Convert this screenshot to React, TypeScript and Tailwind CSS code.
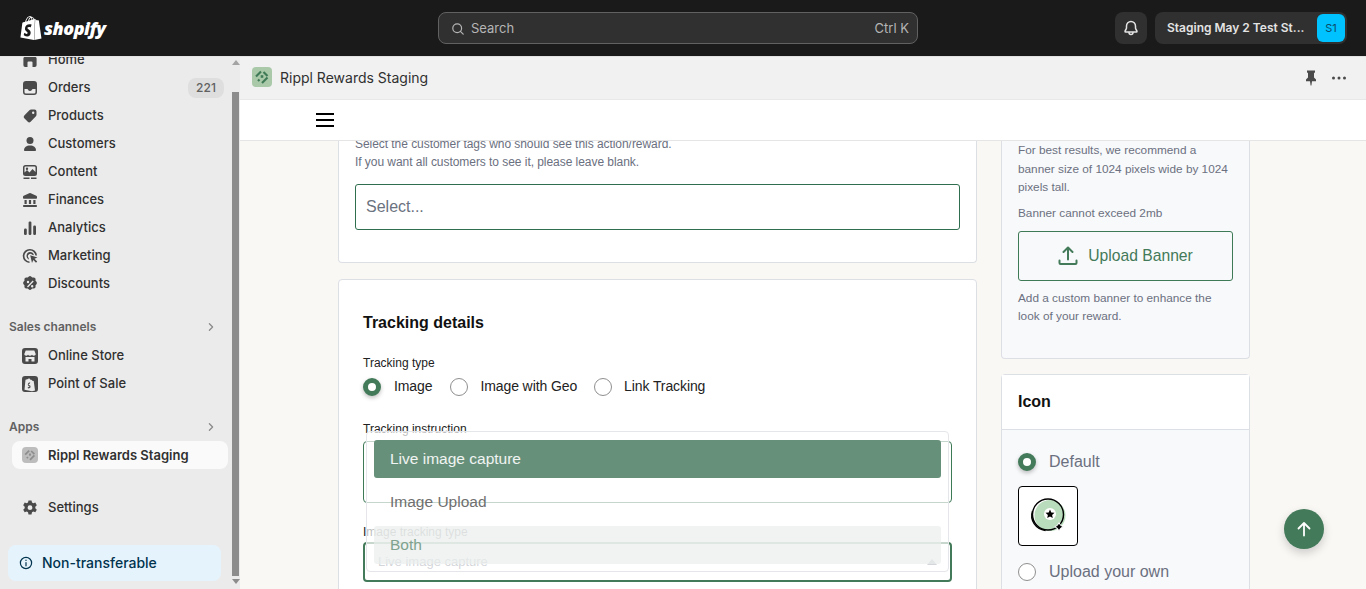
import React from "react";
import { SiShopify } from "react-icons/si";

const I = ({ d, children }: { d?: string; children?: React.ReactNode }) => (
  <svg viewBox="0 0 20 20" className="w-5 h-5 shrink-0" fill="#4a4a4a" fillRule="evenodd">
    {d ? <path d={d} /> : children}
  </svg>
);

const icons: Record<string, React.ReactNode> = {
  home: <I d="M9 3.300a1.600 1.600 0 0 1 2 0l5 3.900c.4.3.6.8.6 1.300v6.700a1.800 1.800 0 0 1-1.800 1.800h-2.300v-4.500a1 1 0 0 0-1-1h-3a1 1 0 0 0-1 1V17H5.200a1.800 1.800 0 0 1-1.800-1.800V8.500c0-.5.2-1 .6-1.300L9 3.300Z" />,
  orders: <I d="M6 3h8a3 3 0 0 1 3 3v8a3 3 0 0 1-3 3H6a3 3 0 0 1-3-3V6a3 3 0 0 1 3-3Zm-1.500 8v3A1.500 1.500 0 0 0 6 15.500h8a1.500 1.500 0 0 0 1.500-1.500v-3h-2.600c-.5 0-.8.3-1 .7a2 2 0 0 1-3.800 0c-.2-.4-.5-.7-1-.7H4.500Z" />,
  products: <I d="M11.200 3.500h3.300A2 2 0 0 1 16.500 5.500v3.300c0 .7-.3 1.300-.8 1.800l-5.100 5.100a2 2 0 0 1-2.800 0l-3.500-3.500a2 2 0 0 1 0-2.800l5.100-5.100c.5-.5 1.100-.8 1.800-.8Zm2 4.500a1.200 1.200 0 1 0 0-2.400 1.200 1.200 0 0 0 0 2.400Z" />,
  customers: <I><circle cx="10" cy="6.500" r="3.500" /><path d="M4 16.200c0-3 2.500-4.700 6-4.700s6 1.700 6 4.700c0 .5-.4.800-.8.800H4.800c-.4 0-.8-.3-.8-.8Z" /></I>,
  content: <I d="M5.500 3h9A2.500 2.500 0 0 1 17 5.500v6a2.500 2.500 0 0 1-2.500 2.500h-9A2.500 2.500 0 0 1 3 11.500v-6A2.500 2.500 0 0 1 5.500 3ZM4.500 10.500l2.500-2.500 2.500 2.500 3-3.500 3 3V5.500a1 1 0 0 0-1-1h-9a1 1 0 0 0-1 1v5ZM3.500 15.500h6v1.500h-6v-1.500Zm7.500 0h5.500v1.500H11v-1.500ZM7 5.500a1.200 1.200 0 1 1 0 2.400 1.200 1.200 0 0 1 0-2.400Z" />,
  finances: <I d="M9.200 3.200a2 2 0 0 1 1.600 0l5.500 2.500c.5.200.7.600.7 1V8a.8.800 0 0 1-.8.800H3.800A.8.800 0 0 1 3 8V6.700c0-.4.200-.8.700-1l5.500-2.500ZM4.500 10h2.200v4H4.500v-4Zm4.400 0h2.200v4H8.900v-4Zm4.400 0h2.200v4h-2.200v-4ZM3.800 15h12.400c.5 0 .8.300.8.800v.4c0 .5-.3.800-.8.800H3.800a.8.800 0 0 1-.8-.8v-.4c0-.5.300-.8.800-.8Z" />,
  analytics: <I><rect x="4" y="10.500" width="2.800" height="6.500" rx="1.200" /><rect x="8.600" y="3.500" width="2.800" height="13.500" rx="1.200" /><rect x="13.200" y="7.500" width="2.800" height="9.500" rx="1.200" /></I>,
  marketing: <I d="M10 3a7 7 0 0 1 7 6.500h-1.600A5.500 5.500 0 1 0 9.500 15.500V17A7 7 0 0 1 10 3Zm0 3a4 4 0 0 1 3.900 3.200l-1.700-.4A2.400 2.400 0 1 0 8.600 12l.5 1.700A4 4 0 0 1 10 6Zm.2 3.200 7.300 2.300-3 1.300 2.700 2.800-1.200 1.200-2.700-2.700-1.300 3-1.800-7.900Z" />,
  discounts: <I d="M8.600 2.700a2 2 0 0 1 2.800 0l.9.800 1.200-.1a2 2 0 0 1 2.100 2.100l-.1 1.200.8.900a2 2 0 0 1 0 2.800l-.8.900.1 1.200a2 2 0 0 1-2.100 2.100l-1.200-.1-.9.800a2 2 0 0 1-2.800 0l-.9-.8-1.200.1a2 2 0 0 1-2.100-2.100l.1-1.200-.8-.9a2 2 0 0 1 0-2.800l.8-.9-.1-1.200A2 2 0 0 1 6.500 3.400l1.200.1.900-.8ZM12.700 6.500l-5.700 6 1 .9 5.700-6-1-.9ZM8 6.800a1.200 1.200 0 1 0 0 2.400 1.200 1.200 0 0 0 0-2.400Zm4.200 4.200a1.200 1.200 0 1 0 0 2.400 1.200 1.200 0 0 0 0-2.400Z" />,
  store: <I d="M5 2h10a3 3 0 0 1 3 3v10a3 3 0 0 1-3 3H5a3 3 0 0 1-3-3V5a3 3 0 0 1 3-3Zm.7 2.500L4.300 8c0 1 .9 1.700 1.900 1.700.7 0 1.300-.3 1.800-.9.400.6 1.200.9 2 .9s1.500-.3 2-.9c.4.6 1.100.9 1.800.9 1 0 1.900-.7 1.900-1.700l-1.400-3.500H5.700ZM5.500 11v4.500h3V13h3v2.500h3V11h-9Z" />,
  pos: <I d="M5 2h10a3 3 0 0 1 3 3v10a3 3 0 0 1-3 3H5a3 3 0 0 1-3-3V5a3 3 0 0 1 3-3Zm3 3-2.500.7-1 10 7.500 1.500 3-.7-1.300-9.500-1.400-.2-.8-1-.8.100C10 4.500 9 4.300 8 5Zm2.200 3.500-.4 1.200c-1.500-.4-1.500 1-.1 1.600 1.500.8 1 3.200-1.100 3.200l-.9-.5.3-1.200c.6.500 1.400.5 1.400 0 0-.7-1.800-1-1.600-2.600.2-1.300 1.300-1.900 2.400-1.700Z" />,
  settings: <I d="M8.500 2.500h3l.5 2.100 1.300.7 2-.7 1.500 2.600-1.500 1.500v1.500l1.500 1.500-1.500 2.600-2-.7-1.300.7-.5 2.200h-3l-.5-2.200-1.300-.7-2 .7-1.500-2.600L4.700 10.200V8.700L3.200 7.200l1.500-2.600 2 .7L8 4.600l.5-2.100ZM10 7.300a2.400 2.400 0 1 0 0 4.800 2.400 2.400 0 0 0 0-4.800Z" />,
};

const RipplMark = ({ color, bg, size }: { color: string; bg: string; size: string }) => (
  <div className={`${size} rounded-[4px] shrink-0 flex items-center justify-center`} style={{ background: bg }}>
    <svg viewBox="0 0 20 20" className="w-full h-full" fill="none" stroke={color} strokeWidth="2.200" strokeLinecap="butt">
      <path d="M4 9.500 9 4.500" />
      <path d="M11.500 5 15.500 9" />
      <path d="M15.500 10.500 10 16" />
      <path d="M6 12.500 7.500 14" />
      <path d="M8.700 9.500h2.600" strokeWidth="2.600" />
    </svg>
  </div>
);

const NavRow = ({ icon, label, badge }: { icon: string; label: string; badge?: string }) => (
  <div className="h-7 flex items-center pl-[20px] pr-[7px]">
    {icons[icon]}
    <span className="ml-[8px] text-[13px] font-medium text-[#303030] flex-1">{label}</span>
    {badge && <span className="h-5 w-9 rounded-lg bg-[#dedede] text-[12px] font-medium text-[#616161] flex items-center justify-center">{badge}</span>}
  </div>
);

const SectionHead = ({ label }: { label: string }) => (
  <div className="h-7 flex items-center pb-[2px] pl-[9px] pr-[12px] justify-between">
    <span className="text-[12px] font-semibold text-[#616161]">{label}</span>
    <svg viewBox="0 0 20 20" className="w-4 h-4" fill="none" stroke="#8a8a8a" strokeWidth="1.600" strokeLinecap="round" strokeLinejoin="round"><path d="M8 6l4 4-4 4" /></svg>
  </div>
);

const Radio = ({ on, shadow }: { on?: boolean; shadow?: boolean }) =>
  on ? (
    <span className={`w-[18px] h-[18px] rounded-full border-[5px] border-[#437a59] bg-white shrink-0 ${shadow ? "shadow-[0_2px_4px_rgba(0,0,0,0.25)]" : ""}`} />
  ) : (
    <span className="w-[18px] h-[18px] rounded-full border border-[#8f8f8f] bg-white shrink-0" />
  );

export default function App() {
  return (
    <div className="relative w-[1366px] h-[589px] overflow-hidden flex flex-col font-['Inter',sans-serif] bg-[#f9f8f5]">
      <header className="h-14 shrink-0 bg-[#1a1a1a] flex items-center">
        <div className="w-[438px] flex items-center pl-[19px] text-white">
          <SiShopify className="w-6 h-6 text-white" />
          <span className="ml-[1px] text-[18px] font-extrabold italic tracking-[-0.5px] font-['Open_Sans',sans-serif]">shopify</span>
        </div>
        <div className="w-[480px] h-8 rounded-lg bg-[#303030] border border-[#616161] flex items-center pt-[1px] pl-[11px] pr-[8px] text-[13px] text-[#b5b5b5]">
          <svg viewBox="0 0 20 20" className="w-4 h-4 mr-[5px]" fill="none" stroke="#b5b5b5" strokeWidth="1.500" strokeLinecap="round"><circle cx="9" cy="9" r="5.500" /><path d="M13 13l3.500 3.500" /></svg>
          <span className="flex-1">Search</span>
          <span>Ctrl K</span>
        </div>
        <div className="ml-[197px] w-8 h-8 rounded-lg bg-[#303030] flex items-center justify-center">
          <svg viewBox="0 0 20 20" className="w-5 h-5" fill="none" stroke="#e3e3e3" strokeWidth="1.500" strokeLinecap="round" strokeLinejoin="round"><path d="M10 3.500a4.500 4.500 0 0 0-4.500 4.500v2c0 1-1.500 2.500-1.500 3.500 0 .4.300.5.600.5h10.800c.3 0 .6-.1.600-.5 0-1-1.500-2.500-1.500-3.500V8A4.500 4.500 0 0 0 10 3.500Z" /><path d="M8 14.500c0 1.200.9 2 2 2s2-.8 2-2" /></svg>
        </div>
        <div className="ml-2 w-[192px] h-8 rounded-lg bg-[#303030] flex items-center pl-[12px] pr-[2px] justify-between">
          <span className="text-[12px] font-semibold text-[#e3e3e3] whitespace-nowrap">Staging May 2 Test St...</span>
          <span className="w-7 h-7 rounded-md bg-[#00c2ff] text-[11px] text-[#0b4a66] flex items-center justify-center">S1</span>
        </div>
      </header>

      <div className="flex-1 flex min-h-0">
        <aside className="relative w-[240px] shrink-0 bg-[#ebebeb] border-t border-[#e3e3e3] flex overflow-hidden">
          <div className="w-[231px] shrink-0 -mt-[11px] flex flex-col">
            <NavRow icon="home" label="Home" />
            <NavRow icon="orders" label="Orders" badge="221" />
            <NavRow icon="products" label="Products" />
            <NavRow icon="customers" label="Customers" />
            <NavRow icon="content" label="Content" />
            <NavRow icon="finances" label="Finances" />
            <NavRow icon="analytics" label="Analytics" />
            <NavRow icon="marketing" label="Marketing" />
            <NavRow icon="discounts" label="Discounts" />
            <div className="mt-[16px]"><SectionHead label="Sales channels" /></div>
            <NavRow icon="store" label="Online Store" />
            <NavRow icon="pos" label="Point of Sale" />
            <div className="mt-[16px]"><SectionHead label="Apps" /></div>
            <div className="-mt-[1px] mx-[12px] w-[216px] h-7 rounded-lg bg-[#fafafa] flex items-center pt-[2px] pl-[10px]">
              <RipplMark color="#8e8e8e" bg="#bdbdbd" size="w-4 h-4 mb-[2px]" />
              <span className="ml-[10px] text-[13px] font-semibold text-[#303030] whitespace-nowrap">Rippl Rewards Staging</span>
            </div>
            <div className="mt-[25px]"><NavRow icon="settings" label="Settings" /></div>
            <div className="mt-[23px] ml-[8px] w-[213px] h-9 rounded-lg bg-[#e5f3fd] flex items-center pb-[1px] pl-[10px] text-[14px] font-medium text-[#00334e]">
              <svg viewBox="0 0 20 20" className="w-4 h-4 mr-[8px]" fill="none" stroke="#00334e" strokeWidth="1.500" strokeLinecap="round"><circle cx="10" cy="10" r="7" /><path d="M10 9.500v4M10 6.500v.3" /></svg>
              Non-transferable
            </div>
          </div>
          <div className="w-[9px] flex flex-col items-center">
            <svg viewBox="0 0 8 5" className="w-2 h-[5px] mt-[3px]" fill="#a3a3a3"><path d="M4 0l4 5H0z" /></svg>
            <div className="mt-[27px] w-[7px] h-[484px] bg-[#8c8c8c]" />
            <svg viewBox="0 0 8 5" className="w-2 h-[5px] mt-[3px]" fill="#8c8c8c"><path d="M4 5L0 0h8z" /></svg>
          </div>
        </aside>

        <main className="flex-1 min-w-0 flex flex-col overflow-hidden border-t border-[#e3e3e3]">
          <div className="h-[43px] shrink-0 bg-[#f1f1f1] flex items-center pb-[2px] pl-[12px] pr-[17px] border-b border-[#e8e8e8]">
            <RipplMark color="#3f7a57" bg="#a9c9a9" size="w-5 h-5" />
            <span className="ml-2 text-[14px] text-[#303030] flex-1">Rippl Rewards Staging</span>
            <svg viewBox="0 0 20 20" className="w-5 h-5 mt-[1px] mr-[8px]" fill="#4a4a4a"><path d="M6 2.500h8v1.800l-1 1v4.200l2 2v1.800h-4l-.6 4.200h-.8L9 13.300H5v-1.800l2-2V5.300l-1-1V2.500Z" /></svg>
            <svg viewBox="0 0 20 20" className="w-5 h-5 mt-[1px]" fill="#4a4a4a"><circle cx="4.500" cy="10" r="1.500" /><circle cx="10" cy="10" r="1.500" /><circle cx="15.500" cy="10" r="1.500" /></svg>
          </div>
          <div className="h-[41px] shrink-0 bg-white border-b border-[#e5e5e5] flex items-center pl-[76px]">
            <div className="w-[18px] flex flex-col gap-[4px]">
              <span className="h-[2px] bg-black" /><span className="h-[2px] bg-black" /><span className="h-[2px] bg-black" />
            </div>
          </div>
          <div className="flex-1 min-h-0 overflow-hidden flex pl-[98px] font-['Liberation_Sans',sans-serif]">
            <div className="w-[639px] shrink-0 flex flex-col gap-4 -mt-[6px]">
              <section className="h-[128px] shrink-0 bg-white border border-[#dcdfe4] border-t-0 rounded-b-[4px] px-4">
                <p className="text-[12px] leading-[18px] text-[#6b7080] -tracking-[0.05px]">Select the customer tags who should see this action/reward.<br />If you want all customers to see it, please leave blank.</p>
                <div className="mt-[13px] h-[46px] border border-[#2f6f4f] rounded-[3px] flex items-center px-[10px] text-[16px] text-[#6b7280]">Select...</div>
              </section>
              <section className="relative h-[400px] shrink-0 bg-white border border-[#dcdfe4] rounded-[4px] px-6 pt-[33px]">
                <h2 className="text-[16px] leading-[20px] font-bold text-[#111]">Tracking details</h2>
                <div className="mt-[21px] text-[12px] leading-[18px] text-[#222]">Tracking type</div>
                <div className="mt-[4px] flex items-center text-[14px] -tracking-[0.1px] text-[#222]">
                  <Radio on shadow />
                  <span className="ml-[13px]">Image</span>
                  <span className="ml-[18px] flex"><Radio /></span>
                  <span className="ml-[12px]">Image with Geo</span>
                  <span className="ml-[17px] flex"><Radio /></span>
                  <span className="ml-[12px]">Link Tracking</span>
                </div>
                <div className="mt-[23px] text-[12px] leading-[18px] text-[#222]">Tracking instruction</div>
                <div className="mt-[3px] h-[62px] border border-[#3f7a57] rounded-[4px]" />
                <div className="mt-[20px] text-[12px] leading-[18px] text-[#222]">Image tracking type</div>
                <div className="mt-[1px] h-[40px] border-2 border-[#437a59] rounded-[4px] flex items-center justify-between px-[13px] text-[13px] text-[#6b7280]">
                  Live image capture
                  <svg viewBox="0 0 10 6" className="w-[10px] h-[6px]" fill="#6b7280"><path d="M5 0l5 6H0z" /></svg>
                </div>
                <div className="absolute left-[27px] top-[151px] w-[583px] h-[141px] rounded-[4px] border border-[#e4e6ea] bg-white/70 pt-[8px] px-[7px] flex flex-col">
                  <div className="h-[38px] shrink-0 rounded-[3px] bg-[#67907a] text-white/90 text-[15.500px] flex items-center pl-[16px]">Live image capture</div>
                  <div className="h-[48px] shrink-0 text-[#6f6f6f] text-[15.500px] flex items-center pl-[16px]">Image Upload</div>
                  <div className="h-[38px] shrink-0 rounded-[3px] bg-[#e9eeec]/70 text-[#7fa28e] text-[15.500px] font-medium flex items-center pl-[16px]">Both</div>
                </div>
              </section>
            </div>
            <div className="ml-[24px] w-[249px] shrink-0 flex flex-col gap-[15px] -mt-[6px]">
              <section className="h-[224px] shrink-0 bg-[#f8f9fb] border border-[#dcdfe4] border-t-0 rounded-b-[4px] px-4 pt-[6px] text-[#6b7080] text-[11.800px] leading-[18.500px]">
                <p>For best results, we recommend a banner size of 1024 pixels wide by 1024 pixels tall.</p>
                <p className="mt-[7px]">Banner cannot exceed 2mb</p>
                <div className="mt-[9px] h-[50px] border border-[#3f7a57] rounded-[3px] flex items-center justify-center text-[15.700px] text-[#437a59]">
                  <svg viewBox="0 0 20 20" className="w-5 h-5 mr-[10px]" fill="none" stroke="#437a59" strokeWidth="2" strokeLinecap="round" strokeLinejoin="round"><path d="M10 13.500V2M5.500 6 10 1.500 14.500 6M1.500 14.500v2.500a1 1 0 0 0 1 1h15a1 1 0 0 0 1-1v-2.500" /></svg>
                  Upload Banner
                </div>
                <p className="mt-[8px] leading-[18px]">Add a custom banner to enhance the look of your reward.</p>
              </section>
              <section className="h-[240px] shrink-0 bg-[#f8f9fb] border border-[#dcdfe4] rounded-[4px]">
                <div className="h-[55px] bg-white border-b border-[#dcdfe4] flex items-center px-4 text-[16px] font-bold text-[#111]">Icon</div>
                <div className="px-4 pt-[23px]">
                  <div className="flex items-center text-[16px] text-[#6b7080] h-[18px]"><Radio on shadow /><span className="ml-[13px]">Default</span></div>
                  <div className="mt-[15px] w-[60px] h-[60px] bg-white border border-black rounded-[4px] flex items-center justify-center">
                    <svg viewBox="0 0 40 40" className="w-10 h-10">
                      <circle cx="22" cy="19.500" r="15.500" fill="#b9dcbc" />
                      <circle cx="20" cy="18.500" r="15.500" fill="none" stroke="#000" strokeWidth="1.400" />
                      <path d="M4.500 15c-3 9 3 18 13 19.500" fill="none" stroke="#000" strokeWidth="1.400" />
                      <circle cx="22" cy="18" r="6" fill="#fff" />
                      <path d="M22 13.500l1.300 3 3.200.3-2.400 2.100.7 3.100-2.800-1.600-2.800 1.600.7-3.100-2.400-2.100 3.200-.3z" fill="#000" />
                      <path d="M31 26.500l1.500 2.800 2.800 1.500-2.800 1.500-1.500 2.800-1.500-2.800-2.800-1.500 2.800-1.500z" fill="#000" stroke="#fff" strokeWidth="1" />
                    </svg>
                  </div>
                  <div className="mt-[17px] flex items-center text-[16px] text-[#6b7080] h-[18px]"><Radio /><span className="ml-[13px]">Upload your own</span></div>
                </div>
              </section>
            </div>
          </div>
        </main>
      </div>

      <button className="absolute left-[1284px] top-[509px] w-10 h-10 rounded-full bg-[#437a59] shadow-[0_4px_10px_rgba(0,0,0,0.18)] flex items-center justify-center">
        <svg viewBox="0 0 20 20" className="w-5 h-5" fill="none" stroke="#fff" strokeWidth="1.800" strokeLinecap="round" strokeLinejoin="round"><path d="M10 16.500V4M4.500 9.500 10 4l5.500 5.500" /></svg>
      </button>
    </div>
  );
}
